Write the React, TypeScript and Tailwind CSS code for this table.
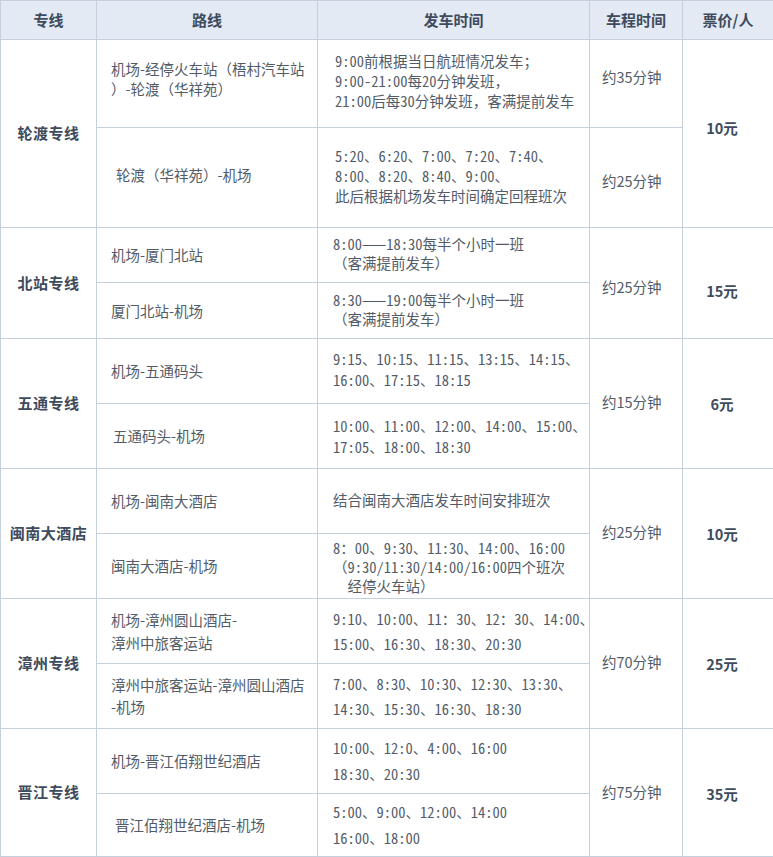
import React from "react";

interface SubRoute {
  route: React.ReactNode;
  times: string[];
  routeClass?: string;
  timesClass?: string;
  h: string;
}

interface Line {
  name: string;
  price: string;
  priceClass?: string;
  durations: { text: string; span: number; cls: string }[];
  subs: SubRoute[];
}

const lines: Line[] = [
  {
    name: "轮渡专线",
    price: "10元",
    priceClass: "pb-[12px]",
    durations: [
      { text: "约35分钟", span: 1, cls: "pb-[14px]" },
      { text: "约25分钟", span: 1, cls: "pt-[6px]" },
    ],
    subs: [
      {
        route: (
          <>
            机场-经停火车站（梧村汽车站
            <br />
            ）-轮渡（华祥苑）
          </>
        ),
        times: ["9:00前根据当日航班情况发车；", "9:00-21:00每20分钟发班，", "21:00后每30分钟发班，客满提前发车"],
        timesClass: "leading-[20px] pl-[17px] pb-[6px]",
        routeClass: "pb-[10px]",
        h: "h-[88px]",
      },
      {
        route: "轮渡（华祥苑）-机场",
        times: ["5:20、6:20、7:00、7:20、7:40、", "8:00、8:20、8:40、9:00、", "此后根据机场发车时间确定回程班次"],
        timesClass: "leading-[20px] pl-[17px] pb-[4px]",
        routeClass: "pl-[19px] pb-[6px]",
        h: "h-[100px]",
      },
    ],
  },
  {
    name: "北站专线",
    price: "15元",
    priceClass: "pt-[16px]",
    durations: [{ text: "约25分钟", span: 2, cls: "pt-[8px]" }],
    subs: [
      {
        route: "机场-厦门北站",
        times: ["8:00——18:30每半个小时一班", "（客满提前发车）"],
        timesClass: "leading-[19px] pb-[4px]",
        h: "h-[55px]",
      },
      {
        route: "厦门北站-机场",
        times: ["8:30——19:00每半个小时一班", "（客满提前发车）"],
        timesClass: "leading-[19px] pb-[4px]",
        h: "h-[56px]",
      },
    ],
  },
  {
    name: "五通专线",
    price: "6元",
    durations: [{ text: "约15分钟", span: 2, cls: "pb-[4px]" }],
    subs: [
      {
        route: "机场-五通码头",
        times: ["9:15、10:15、11:15、13:15、14:15、", "16:00、17:15、18:15"],
        timesClass: "leading-[21px] pb-[4px]",
        h: "h-[65px]",
      },
      {
        route: "五通码头-机场",
        routeClass: "pl-[16px]",
        times: ["10:00、11:00、12:00、14:00、15:00、", "17:05、18:00、18:30"],
        timesClass: "leading-[21px]",
        h: "h-[65px]",
      },
    ],
  },
  {
    name: "闽南大酒店",
    price: "10元",
    durations: [{ text: "约25分钟", span: 2, cls: "pb-[4px]" }],
    subs: [
      {
        route: "机场-闽南大酒店",
        times: ["结合闽南大酒店发车时间安排班次"],
        timesClass: "pb-[3px]",
        h: "h-[65px]",
      },
      {
        route: "闽南大酒店-机场",
        times: ["8：00、9:30、11:30、14:00、16:00", "（9:30/11:30/14:00/16:00四个班次", "  经停火车站）"],
        timesClass: "leading-[19px] pl-[11px]",
        h: "h-[65px]",
      },
    ],
  },
  {
    name: "漳州专线",
    price: "25元",
    durations: [{ text: "约70分钟", span: 2, cls: "pb-[4px]" }],
    subs: [
      {
        route: (
          <>
            机场-漳州圆山酒店-
            <br />
            漳州中旅客运站
          </>
        ),
        routeClass: "leading-[23px]",
        times: ["9:10、10:00、11：30、12：30、14:00、", "15:00、16:30、18:30、20:30"],
        timesClass: "leading-[25px] pl-[10px]",
        h: "h-[65px]",
      },
      {
        route: (
          <>
            漳州中旅客运站-漳州圆山酒店
            <br />
            -机场
          </>
        ),
        routeClass: "leading-[22px]",
        times: ["7:00、8:30、10:30、12:30、13:30、", "14:30、15:30、16:30、18:30"],
        timesClass: "leading-[25px] pl-[12px]",
        h: "h-[65px]",
      },
    ],
  },
  {
    name: "晋江专线",
    price: "35元",
    priceClass: "pt-[2px]",
    durations: [{ text: "约75分钟", span: 2, cls: "pb-[2px]" }],
    subs: [
      {
        route: "机场-晋江佰翔世纪酒店",
        times: ["10:00、12:0、4:00、16:00", "18:30、20:30"],
        timesClass: "leading-[26px]",
        h: "h-[65px]",
      },
      {
        route: "晋江佰翔世纪酒店-机场",
        routeClass: "pl-[18px]",
        times: ["5:00、9:00、12:00、14:00", "16:00、18:00"],
        timesClass: "leading-[26px]",
        h: "h-[63px]",
      },
    ],
  },
];

const cell = "border border-[#c5d0dd] align-middle";
const sans = "font-['Noto_Sans_CJK_SC',sans-serif]";
const mono = "font-['Noto_Sans_Mono_CJK_SC','Noto_Sans_CJK_SC',sans-serif]";

const App: React.FC = () => {
  return (
    <div className="w-[773px] h-[857px] bg-white overflow-hidden">
      <table className={`w-[773px] table-fixed border-collapse text-[#525c68] ${sans}`}>
        <colgroup>
          <col className="w-[96px]" />
          <col className="w-[221px]" />
          <col className="w-[272px]" />
          <col className="w-[93px]" />
          <col className="w-[91px]" />
        </colgroup>
        <thead>
          <tr className="h-[39px] bg-[#e3eaf3] text-[#3e4b5d] text-[15px] font-bold">
            <th className={`${cell} text-center`}>专线</th>
            <th className={`${cell} text-center`}>路线</th>
            <th className={`${cell} text-center`}>发车时间</th>
            <th className={`${cell} text-center`}>车程时间</th>
            <th className={`${cell} text-center`}>票价/人</th>
          </tr>
        </thead>
        <tbody>
          {lines.map((line) =>
            line.subs.map((sub, i) => {
              const dur = line.durations.length > 1 ? line.durations[i] : i === 0 ? line.durations[0] : null;
              return (
                <tr key={line.name + i} className={sub.h}>
                  {i === 0 && (
                    <td
                      rowSpan={line.subs.length}
                      className={`${cell} text-center text-[15px] font-bold text-[#3e4b5d] tracking-[0.5px]`}
                    >
                      {line.name}
                    </td>
                  )}
                  <td className={`${cell} pl-[14px] text-[14.5px] leading-[20px] whitespace-nowrap ${sub.routeClass ?? ""}`}>
                    {sub.route}
                  </td>
                  <td className={`${cell} pl-[15px] text-[14.5px] whitespace-pre ${mono} ${sub.timesClass ?? ""}`}>
                    {sub.times.map((t, k) => (
                      <div key={k}>{t}</div>
                    ))}
                  </td>
                  {dur && (
                    <td rowSpan={dur.span} className={`${cell} pl-[12px] text-[14.5px] whitespace-nowrap ${dur.cls}`}>
                      {dur.text}
                    </td>
                  )}
                  {i === 0 && (
                    <td
                      rowSpan={line.subs.length}
                      className={`${cell} text-center pr-[12px] text-[14.5px] font-bold text-[#3e4b5d] ${line.priceClass ?? ""}`}
                    >
                      {line.price}
                    </td>
                  )}
                </tr>
              );
            })
          )}
        </tbody>
      </table>
    </div>
  );
};

export default App;
